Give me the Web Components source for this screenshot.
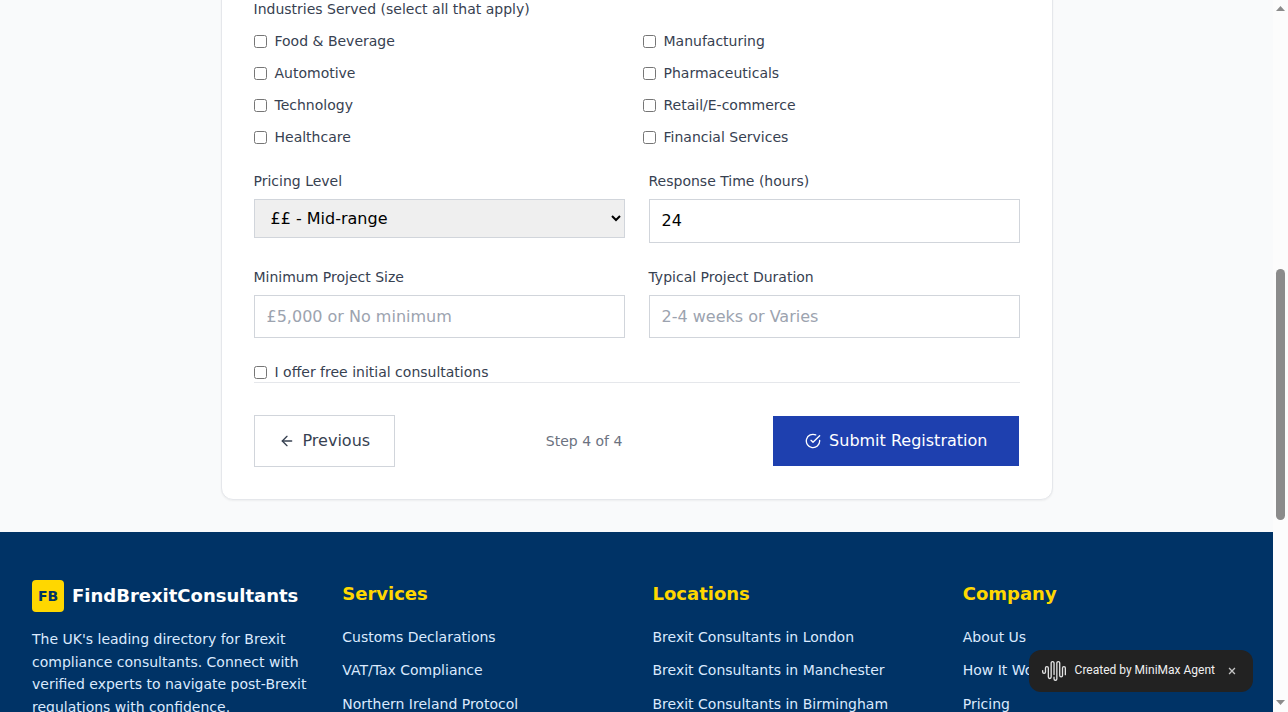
<!DOCTYPE html>
<html lang="en">
<head>
<meta charset="utf-8">
<title>Consultant Registration</title>
<style>
  html, body { margin: 0; height: 100%; overflow: hidden; }
  body { font-family: "DejaVu Sans", sans-serif; font-size: 16px; line-height: 24px; color: #374151; }
</style>
</head>
<body>
<app-shell>
  <registration-card>
    <check-group label="Industries Served (select all that apply)">
      <check-option>Food &amp; Beverage</check-option>
      <check-option>Manufacturing</check-option>
      <check-option>Automotive</check-option>
      <check-option>Pharmaceuticals</check-option>
      <check-option>Technology</check-option>
      <check-option>Retail/E-commerce</check-option>
      <check-option>Healthcare</check-option>
      <check-option>Financial Services</check-option>
    </check-group>
    <field-row>
      <form-field label="Pricing Level" kind="select" value="££ - Mid-range"></form-field>
      <form-field label="Response Time (hours)" kind="number" value="24"></form-field>
      <form-field label="Minimum Project Size" kind="text" placeholder="£5,000 or No minimum"></form-field>
      <form-field label="Typical Project Duration" kind="text" placeholder="2-4 weeks or Varies"></form-field>
    </field-row>
    <check-option>I offer free initial consultations</check-option>
    <step-nav slot="nav">Step 4 of 4</step-nav>
  </registration-card>
  <site-footer slot="footer">
    <footer-brand></footer-brand>
    <footer-links heading="Services"><span>Customs Declarations</span><span>VAT/Tax Compliance</span><span>Northern Ireland Protocol</span></footer-links>
    <footer-links heading="Locations"><span>Brexit Consultants in London</span><span>Brexit Consultants in Manchester</span><span>Brexit Consultants in Birmingham</span></footer-links>
    <footer-links heading="Company"><span>About Us</span><span>How It Works</span><span>Pricing</span></footer-links>
  </site-footer>
  <agent-badge slot="overlay">Created by MiniMax Agent</agent-badge>
  <scroll-rail slot="rail"></scroll-rail>
</app-shell>
<script>
const define = (name, render) => customElements.define(name, class extends HTMLElement {
  constructor() {
    super();
    this.attachShadow({ mode: 'open' });
  }
  connectedCallback() {
    const t = document.createElement('template');
    t.innerHTML = '<style>*{box-sizing:border-box}</style>' + render(this);
    this.shadowRoot.replaceChildren(t.content.cloneNode(true));
  }
});
const attr = (el, n) => el.getAttribute(n) || '';

define('app-shell', () => `
<style>
  :host { display: flex; height: 712px; overflow: hidden; position: relative; }
  .page { flex: 1; min-width: 0; display: flex; flex-direction: column; background: #f9fafb; }
  main { height: 532px; flex: none; display: flex; justify-content: center; align-items: flex-end; padding-bottom: 32px; }
  ::slotted(site-footer) { flex: 1; }
</style>
<div class="page"><main><slot></slot></main><slot name="footer"></slot></div>
<slot name="rail"></slot><slot name="overlay"></slot>`);

define('registration-card', () => `
<style>
  :host { display: block; box-sizing: border-box; width: 832px; padding: 32px; background: #fff;
    border: 1px solid #e5e7eb; border-radius: 12px; box-shadow: 0 1px 2px rgba(0,0,0,.05); }
  .body { display: flex; flex-direction: column; gap: 24px; }
</style>
<div class="body"><slot></slot></div><slot name="nav"></slot>`);

define('check-group', el => `
<style>
  :host { display: block; font-size: 14px; line-height: 20px; }
  .label { margin-bottom: 12px; }
  .grid { display: grid; grid-template-columns: 1fr 1fr; gap: 12px; }
</style>
<div class="label">${attr(el, 'label')}</div><div class="grid"><slot></slot></div>`);

define('check-option', () => `
<style>
  :host { display: block; font-size: 14px; line-height: 20px; }
  label { display: flex; align-items: center; gap: 8px; }
  input { margin: 0; width: 13px; height: 13px; }
</style>
<label><input type="checkbox"><span><slot></slot></span></label>`);

define('field-row', () => `
<style>:host { display: grid; grid-template-columns: 1fr 1fr; gap: 24px; }</style><slot></slot>`);

define('form-field', el => {
  const kind = attr(el, 'kind');
  const control = kind === 'select'
    ? `<select><option>${attr(el, 'value')}</option></select>`
    : `<input class="${kind}" type="${kind}" value="${attr(el, 'value')}" placeholder="${attr(el, 'placeholder')}">`;
  return `
<style>
  :host { display: block; }
  .label { font-size: 14px; line-height: 20px; margin-bottom: 8px; }
  input, select { display: block; width: 100%; height: 43px; margin: 0; padding: 8px 12px; font: inherit; color: #000;
    border: 1px solid #d1d5db; border-radius: 0; }
  input { background: #fff; }
  .number { height: 44px; padding: 7px 12px 9px; }
  select { height: 39px; background-color: #efefef; padding: 8px 12px; }
  input::placeholder { color: #9ca3af; opacity: 1; }
</style>
<div class="label">${attr(el, 'label')}</div>${control}`;
});

define('step-nav', () => `
<style>
  :host { display: flex; justify-content: space-between; align-items: center; border-top: 1px solid #e5e7eb; padding-top: 32px; }
  button { display: flex; align-items: center; gap: 8px; font: inherit; margin: 0; border: 0; white-space: nowrap; }
  .prev { height: 52px; padding: 0 24px; background: #fff; border: 1px solid #d1d5db; color: #374151; }
  .submit { height: 50px; padding: 0 31.5px 0 32px; margin-right: .6px; background: #1e40af; color: #fff; }
  .step { font-size: 14px; line-height: 20px; color: #6b7280; }
  svg { display: block; width: 16px; height: 16px; fill: none; stroke: currentColor; stroke-width: 2; stroke-linecap: round; stroke-linejoin: round; }
</style>
<button class="prev"><svg viewBox="0 0 24 24"><path d="m12 19-7-7 7-7"/><path d="M19 12H5"/></svg>Previous</button>
<span class="step"><slot></slot></span>
<button class="submit"><svg viewBox="0 0 24 24"><path d="M22 11.08V12a10 10 0 1 1-5.93-9.14"/><path d="m9 11 3 3L22 4"/></svg>Submit Registration</button>`);

define('site-footer', () => `
<style>
  :host { display: grid; box-sizing: border-box; min-height: 0; overflow: hidden; grid-template-columns: repeat(4, minmax(0, 1fr)); gap: 32px;
    padding: 48px 32px 0; background: #003366; color: #dbeafe; }
</style><slot></slot>`);

define('footer-brand', () => `
<style>
  :host { display: block; }
  .brand { display: flex; align-items: center; gap: 8px; margin-bottom: 15.9px; }
  .mark { width: 32px; height: 32px; border-radius: 4px; display: grid; place-items: center; background: #ffd700; color: #003366; font-size: 14px; font-weight: 700; }
  .name { font-size: 18px; line-height: 28px; font-weight: 700; color: #fff; }
  p { margin: 0; font-size: 14px; line-height: 22.75px; }
</style>
<div class="brand"><span class="mark">FB</span><span class="name">FindBrexitConsultants</span></div>
<p>The UK's leading directory for Brexit compliance consultants. Connect with verified experts to navigate post-Brexit regulations with confidence.</p>`);

define('footer-links', el => `
<style>
  :host { display: block; }
  h3 { margin: 0 0 16.6px; font-size: 18px; line-height: 28px; font-weight: 700; color: #ffd700; }
  nav { display: flex; flex-direction: column; gap: 8px; font-size: 14px; line-height: 25.5px; }
</style>
<h3>${attr(el, 'heading')}</h3><nav><slot></slot></nav>`);

define('agent-badge', () => `
<style>
  :host { position: absolute; left: 1029px; top: 650px; width: 224px; height: 42px; box-sizing: border-box; padding: 0 17px 0 13px;
    display: flex; align-items: center; background: #222; border-radius: 12px; color: #f0f0f0; font: 400 12px/18px Roboto, sans-serif; }
  .logo { width: 24px; height: 24px; margin-right: 8.6px; flex: none; }
  .text { white-space: nowrap; flex: 1; position: relative; top: -1px; }
  .close { width: 8px; height: 8px; flex: none; }
</style>
<svg class="logo" viewBox="0 0 24 24" fill="#e4e4e4"><path d="M16.278 2c1.156 0 2.093.927 2.093 2.07v12.501a.74.74 0 00.744.709.74.74 0 00.743-.709V9.099a2.06 2.06 0 012.071-2.049A2.06 2.06 0 0124 9.1v6.561a.649.649 0 01-.652.645.649.649 0 01-.653-.645V9.1a.762.762 0 00-.766-.758.762.762 0 00-.766.758v7.472a2.037 2.037 0 01-2.048 2.026 2.037 2.037 0 01-2.048-2.026v-12.5a.785.785 0 00-.788-.753.785.785 0 00-.789.752l-.001 15.904A2.037 2.037 0 0113.441 22a2.037 2.037 0 01-2.048-2.026V18.04c0-.356.292-.645.652-.645.36 0 .652.289.652.645v1.934c0 .263.142.506.372.638.23.131.514.131.744 0a.734.734 0 00.372-.638V4.07c0-1.143.937-2.07 2.093-2.07zm-5.674 0c1.156 0 2.093.927 2.093 2.07v11.523a.648.648 0 01-.652.645.648.648 0 01-.652-.645V4.07a.785.785 0 00-.789-.78.785.785 0 00-.789.78v14.013a2.06 2.06 0 01-2.07 2.048 2.06 2.06 0 01-2.071-2.048V9.1a.762.762 0 00-.766-.758.762.762 0 00-.766.758v3.8a2.06 2.06 0 01-2.071 2.049A2.06 2.06 0 010 12.9v-1.378c0-.357.292-.646.652-.646.36 0 .653.29.653.646V12.9c0 .418.343.757.766.757s.766-.339.766-.757V9.099a2.06 2.06 0 012.07-2.048 2.06 2.06 0 012.071 2.048v8.984c0 .419.343.758.767.758.423 0 .766-.339.766-.758V4.07c0-1.143.937-2.07 2.093-2.07z"/></svg>
<span class="text"><slot></slot></span>
<svg class="close" viewBox="0 0 9 9" fill="none" stroke="#c4c4c4" stroke-width="1.5"><path d="M1.2 1.2l6.6 6.6M7.8 1.2L1.2 7.8"/></svg>`);

define('scroll-rail', () => `
<style>
  :host { display: flex; flex-direction: column; align-items: center; box-sizing: border-box; flex: none; width: 15px; height: 712px; background: #fcfcfc; padding: 6px 0 7px; }
  svg { display: block; width: 9px; height: 5px; fill: #8b8b8b; }
  .track { flex: 1; padding-top: 258px; }
  .thumb { width: 9px; height: 251px; border-radius: 5px; background: #8b8b8b; }
</style>
<svg viewBox="0 0 9 5"><path d="M0 5 4.5 0 9 5z"/></svg>
<div class="track"><div class="thumb"></div></div>
<svg viewBox="0 0 9 5"><path d="M0 0h9L4.5 5z"/></svg>`);
</script>
</body>
</html>
